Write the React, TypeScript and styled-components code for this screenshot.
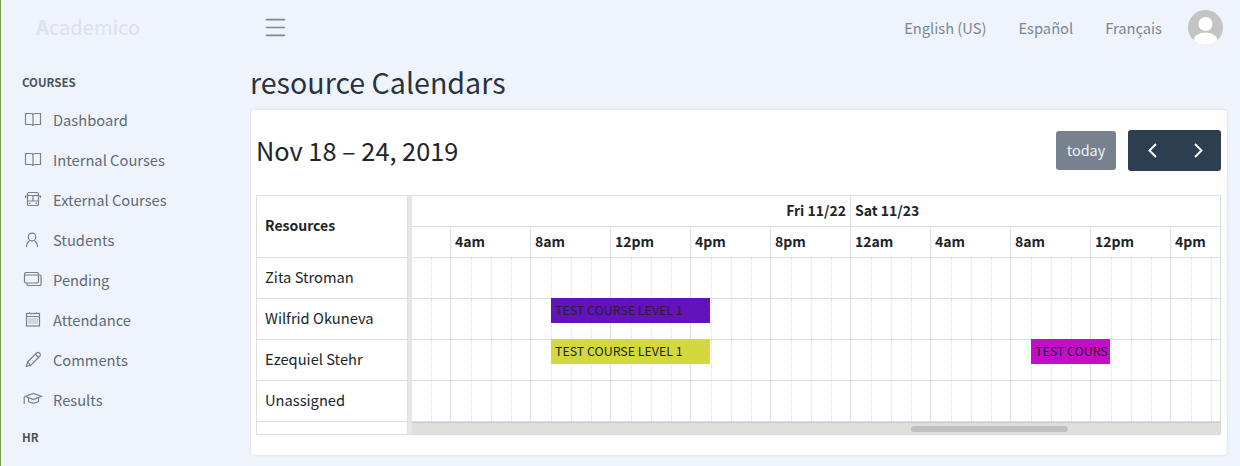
import React from 'react';
import styled, { createGlobalStyle } from 'styled-components';
import { Menu } from 'lucide-react';

const FONT = `"Noto Sans CJK JP", "Noto Sans", sans-serif`;

const GlobalStyle = createGlobalStyle`
  html, body { margin: 0; padding: 0; background: #eff3fb; }
  body { font-family: ${FONT}; overflow: hidden; }
  * { box-sizing: border-box; }
`;

const Page = styled.div`
  display: flex;
  width: 1240px;
  height: 466px;
  overflow: hidden;
  background: #eff3fb;
  border-left: 1px solid #6e9e45;
`;

const Sidebar = styled.aside`
  width: 250px;
  flex: none;
  padding-left: 21px;
`;

const Brand = styled.div`
  height: 56px;
  padding-left: 14px;
  font-size: 20px;
  line-height: 54px;
  letter-spacing: 0.1px;
  color: #dde2ea;
  b { font-weight: 700; }
`;

const SectionLabel = styled.div<{ $top: number }>`
  margin-top: ${p => p.$top}px;
  height: 18px;
  font-size: 11.52px;
  line-height: 16px;
  font-weight: 700;
  color: #4a5462;
`;

const NavList = styled.div`
  padding-top: 8px;
`;

const NavItem = styled.div`
  display: flex;
  align-items: center;
  height: 40px;
  font-size: 14.7px;
  line-height: 20px;
  color: #5f6b7a;
`;

const NavText = styled.span`
  padding-bottom: 1px;
`;

const NavIcon = styled.svg`
  flex: none;
  width: 20px;
  height: 20px;
  margin: 0 10px 0 1px;
  fill: none;
  stroke: #76828f;
  stroke-width: 1.2;
`;

const Main = styled.main`
  flex: 1;
  min-width: 0;
`;

const Topbar = styled.header`
  display: flex;
  align-items: center;
  height: 56px;
  padding: 0 17px 2px 11px;
`;

const Burger = styled.div`
  display: flex;
  color: #7d8996;
  margin-right: auto;
`;

const LangLink = styled.span`
  font-size: 14.7px;
  color: #7a8797;
  margin-right: 32px;
`;

const Avatar = styled.svg`
  width: 35px;
  height: 35px;
  border-radius: 50%;
  margin-left: -6px;
`;

const PageTitle = styled.h1`
  margin: 0 0 0 -1px;
  height: 54px;
  font-size: 28.6px;
  line-height: 51px;
  font-weight: 400;
  color: #29333f;
`;

const Card = styled.section`
  width: 976px;
  height: 345px;
  background: #fff;
  border-radius: 3px;
  box-shadow: 0 0 2px rgba(90, 105, 125, 0.3);
  padding: 0 6px 0 5px;
`;

const CalToolbar = styled.div`
  display: flex;
  align-items: center;
  height: 85px;
  padding-bottom: 4px;
`;

const CalTitle = styled.h2`
  margin: 0 auto 2px 0;
  font-size: 25.3px;
  line-height: 40px;
  font-weight: 400;
  color: #212529;
`;

const TodayButton = styled.div`
  width: 60px;
  height: 39px;
  margin-right: 12px;
  background: #78828e;
  border-radius: 3px;
  color: #eef1f4;
  font-size: 14.4px;
  line-height: 38px;
  text-align: center;
`;

const NavButtons = styled.div`
  display: flex;
  width: 93px;
  height: 41px;
  padding-left: 2px;
  background: #2c3e50;
  border-radius: 3px;
  color: #fff;
`;

const Arrow = styled.div`
  flex: 1;
  display: flex;
  align-items: center;
  justify-content: center;
`;

const Scheduler = styled.div`
  display: flex;
  width: 965px;
  height: 240px;
  border: 1px solid #ddd;
`;

const ResourcePane = styled.div`
  width: 151px;
  flex: none;
  border-right: 1px solid #ddd;
`;

const ResourceHead = styled.div`
  height: 62px;
  padding: 0 8px;
  font-size: 14px;
  line-height: 59px;
  font-weight: 700;
  color: #212529;
  border-bottom: 1px solid #ddd;
`;

const ResourceRow = styled.div`
  height: 41px;
  padding: 0 8px;
  font-size: 14.7px;
  line-height: 38px;
  color: #212529;
  border-bottom: 1px solid #ddd;
  white-space: nowrap;
`;

const Divider = styled.div`
  width: 4px;
  flex: none;
  background: #e6e6e6;
`;

const TimePane = styled.div`
  flex: 1;
  min-width: 0;
  display: flex;
  flex-direction: column;
  overflow: hidden;
`;

const DayRow = styled.div`
  display: flex;
  height: 31px;
  flex: none;
  border-bottom: 1px solid #ddd;
`;

const DayCell = styled.div<{ $width: number; $align: 'left' | 'right' }>`
  width: ${p => p.$width}px;
  flex: none;
  padding: 0 4px;
  font-size: 14px;
  line-height: 28px;
  font-weight: 700;
  color: #212529;
  text-align: ${p => p.$align};
  border-right: ${p => (p.$align === 'right' ? '1px solid #ddd' : 'none')};
`;

const HourRow = styled.div`
  display: flex;
  height: 31px;
  flex: none;
  border-bottom: 1px solid #ddd;
`;

const HourCell = styled.div<{ $width: number }>`
  width: ${p => p.$width}px;
  flex: none;
  padding-left: 4px;
  font-size: 14px;
  line-height: 28px;
  font-weight: 700;
  color: #212529;
  border-right: 1px solid #ddd;
  white-space: nowrap;
`;

const Lane = styled.div`
  position: relative;
  display: flex;
  height: 41px;
  flex: none;
  border-bottom: 1px solid #ddd;
`;

const Slot = styled.div<{ $major: boolean; $width: number }>`
  width: ${p => p.$width}px;
  flex: none;
  border-left: 1px ${p => (p.$major ? 'solid #ddd' : 'dotted #ddd')};
  &:first-child { margin-left: -42px; }
`;

const Event = styled.div<{ $left: number; $width: number; $bg: string }>`
  position: absolute;
  top: -1px;
  left: ${p => p.$left}px;
  width: ${p => p.$width}px;
  height: 25px;
  padding-left: 4px;
  background: ${p => p.$bg};
  font-size: 12.4px;
  line-height: 24px;
  color: #212529;
  white-space: nowrap;
`;

const ScrollTrack = styled.div`
  flex: 1;
  background: #dfdfdc;
  border-top: 1px solid #c9c9c6;
  position: relative;
`;

const ScrollThumb = styled.div`
  position: absolute;
  top: 3px;
  left: 499px;
  width: 157px;
  height: 6px;
  border-radius: 3px;
  background: #bfc1bf;
`;

const BookIcon = () => (
  <NavIcon viewBox="0 0 20 20">
    <path d="M10 5.2V16M10 5.2C10 4 9.2 3.5 8 3.5H2.5V14.5H8C9.2 14.5 10 15 10 16C10 15 10.8 14.5 12 14.5H17.5V3.5H12C10.8 3.5 10 4 10 5.2Z" />
  </NavIcon>
);

const BusIcon = () => (
  <NavIcon viewBox="0 0 20 20">
    <path d="M6 2.5H14Q15.5 2.5 15.5 4V14.5Q15.5 15.5 14.5 15.5H5.5Q4.5 15.5 4.5 14.5V4Q4.5 2.5 6 2.5Z" />
    <path d="M4.5 5.5H15.5M4.5 11H15.5M10 5.5V11M6 13.3H7.5M12.5 13.3H14M4.5 6H2.5V8M15.5 6H17.5V8" />
  </NavIcon>
);

const UserIcon = () => (
  <NavIcon viewBox="0 0 20 20">
    <circle cx="9" cy="7" r="3.8" />
    <path d="M3.5 17C3.5 13.5 5 11.8 7 10.6M14.5 17C14.5 13.5 13 11.8 11 10.6" />
  </NavIcon>
);

const CardsIcon = () => (
  <NavIcon viewBox="0 0 20 20">
    <rect x="1.5" y="2.5" width="14" height="10.5" rx="1.5" />
    <path d="M1.5 5H15.5M15.5 5H17Q18 5 18 6V14.5Q18 15.5 17 15.5H5Q4 15.5 4 14.5V13" />
  </NavIcon>
);

const CalendarIcon = () => (
  <NavIcon viewBox="0 0 20 20">
    <rect x="3.5" y="3.5" width="13" height="12.5" />
    <path d="M3.5 6.5H16.5M6.5 2.2V4M13.5 2.2V4" />
    <path d="M5.5 9H15M5.5 11H15M5.5 13H15" strokeDasharray="1 1" />
  </NavIcon>
);

const PencilIcon = () => (
  <NavIcon viewBox="0 0 20 20">
    <path d="M4.5 12L13.8 2.8Q15 1.8 16.2 2.8L17 3.6Q18 4.8 17 6L7.8 15.3L3.5 16.5Z" />
    <path d="M12.3 4.3L15.6 7.5M4.5 12L7.8 15.3" />
  </NavIcon>
);

const CapIcon = () => (
  <NavIcon viewBox="0 0 20 20">
    <path d="M1.5 6.8L10.5 3.5L18.5 6.3L10.5 9.5L3 6.8" />
    <path d="M5.5 8V11.5Q10.5 14.8 15.5 11.5V7.6M1.2 6.8V14" />
  </NavIcon>
);

const NAV = [
  { label: 'Dashboard', icon: BookIcon },
  { label: 'Internal Courses', icon: BookIcon },
  { label: 'External Courses', icon: BusIcon },
  { label: 'Students', icon: UserIcon },
  { label: 'Pending', icon: CardsIcon },
  { label: 'Attendance', icon: CalendarIcon },
  { label: 'Comments', icon: PencilIcon },
  { label: 'Results', icon: CapIcon },
];

const HOURS = ['4am', '8am', '12pm', '4pm', '8pm', '12am', '4am', '8am', '12pm', '4pm'];
const RESOURCES = ['Zita Stroman', 'Wilfrid Okuneva', 'Ezequiel Stehr', 'Unassigned'];
// minor lines sit 1px late in the reference, so the widths in a 4 slot block differ
const SLOT_WIDTHS = [21, 20, 20, 19];
const SLOT_COUNT = 44;

const EVENTS: Record<string, { left: number; width: number; bg: string; text: string }[]> = {
  'Wilfrid Okuneva': [{ left: 139, width: 159, bg: '#6412bd', text: 'TEST COURSE LEVEL 1' }],
  'Ezequiel Stehr': [
    { left: 139, width: 159, bg: '#d3d83f', text: 'TEST COURSE LEVEL 1' },
    { left: 619, width: 79, bg: '#c30dc9', text: 'TEST COURS' },
  ],
};

const App: React.FC = () => (
  <Page>
    <GlobalStyle />
    <Sidebar>
      <Brand><b>A</b>cademico</Brand>
      <SectionLabel $top={18}>COURSES</SectionLabel>
      <NavList>
        {NAV.map(({ label, icon: Icon }) => (
          <NavItem key={label}>
            <Icon />
            <NavText>{label}</NavText>
          </NavItem>
        ))}
      </NavList>
      <SectionLabel $top={9}>HR</SectionLabel>
    </Sidebar>
    <Main>
      <Topbar>
        <Burger><Menu size={27} strokeWidth={1.4} /></Burger>
        <LangLink>English (US)</LangLink>
        <LangLink>Español</LangLink>
        <LangLink>Français</LangLink>
        <Avatar viewBox="0 0 35 35">
          <rect width="35" height="35" fill="#c4c4c4" />
          <circle cx="17.5" cy="14" r="7" fill="#fff" />
          <ellipse cx="17.5" cy="31" rx="12" ry="8.5" fill="#fff" />
        </Avatar>
      </Topbar>
      <PageTitle>resource Calendars</PageTitle>
      <Card>
        <CalToolbar>
          <CalTitle>Nov 18 – 24, 2019</CalTitle>
          <TodayButton>today</TodayButton>
          <NavButtons>
            <Arrow>
              <svg width="11" height="17" viewBox="0 0 11 17" fill="none" stroke="currentColor" strokeWidth="1.9"><path d="M9 2 2.5 8.5 9 15" /></svg>
            </Arrow>
            <Arrow>
              <svg width="11" height="17" viewBox="0 0 11 17" fill="none" stroke="currentColor" strokeWidth="1.9"><path d="M2 2l6.5 6.5L2 15" /></svg>
            </Arrow>
          </NavButtons>
        </CalToolbar>
        <Scheduler>
          <ResourcePane>
            <ResourceHead>Resources</ResourceHead>
            {RESOURCES.map(name => <ResourceRow key={name}>{name}</ResourceRow>)}
          </ResourcePane>
          <Divider />
          <TimePane>
            <DayRow>
              <DayCell $width={439} $align="right">Fri 11/22</DayCell>
              <DayCell $width={300} $align="left">Sat 11/23</DayCell>
            </DayRow>
            <HourRow>
              <HourCell $width={39} />
              {HOURS.map((h, i) => <HourCell key={i} $width={80}>{h}</HourCell>)}
            </HourRow>
            {RESOURCES.map(name => (
              <Lane key={name}>
                {Array.from({ length: SLOT_COUNT }, (_, i) => (
                  <Slot key={i} $major={i % 4 === 0} $width={SLOT_WIDTHS[i % 4]} />
                ))}
                {(EVENTS[name] || []).map(e => (
                  <Event key={e.left} $left={e.left} $width={e.width} $bg={e.bg}>{e.text}</Event>
                ))}
              </Lane>
            ))}
            <ScrollTrack><ScrollThumb /></ScrollTrack>
          </TimePane>
        </Scheduler>
      </Card>
    </Main>
  </Page>
);

export default App;
